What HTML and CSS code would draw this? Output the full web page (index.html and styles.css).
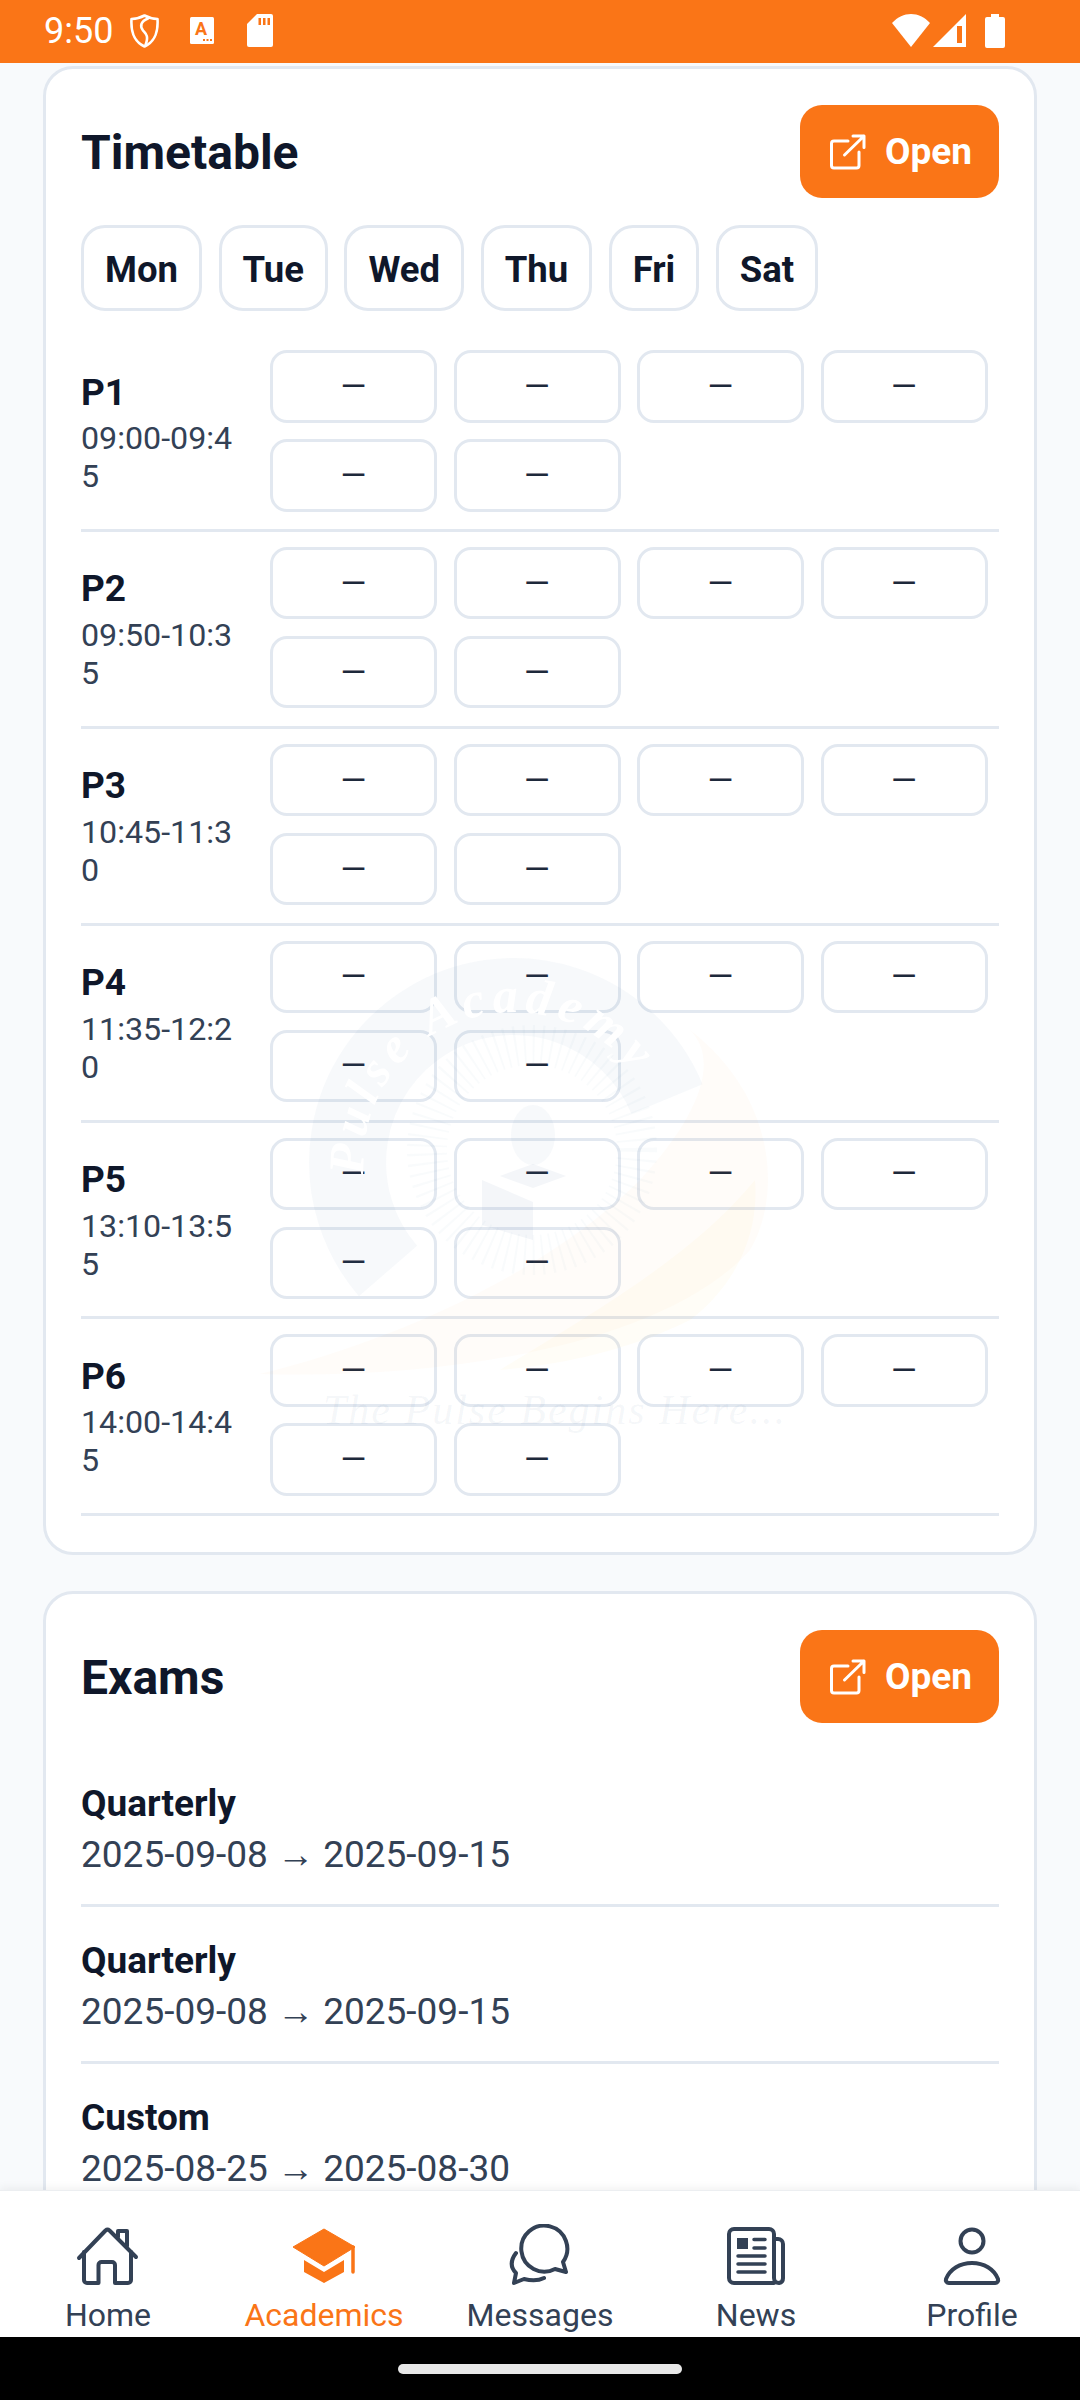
FILE: index.html
```html
<!DOCTYPE html>
<html lang="en">
<head>
    <meta charset="UTF-8">
    <meta name="viewport" content="width=device-width, initial-scale=1.0">
    <title>Academics</title>
    <link rel="stylesheet" href="styles.css">
</head>
<body>
<div class="screen">
    <div class="status-bar">
        <div class="status-left">
            <span class="clock">9:50</span>
            <svg class="ic-shield" viewBox="0 0 29 34" fill="none" stroke="#fff" stroke-width="2.6" stroke-linejoin="round"><path d="M14.5 1.5C19 4 23 4.8 27.5 5C28.2 17 26 27 14.5 32.5C3 27 .8 17 1.5 5C6 4.8 10 4 14.5 1.5Z"/><path d="M18 4.5C11 7 9.5 12 13 16.5C16 20 19 22 15.5 31" stroke-linecap="round"/></svg>
            <svg class="ic-sim" viewBox="0 0 24 27"><rect width="24" height="27" rx="1.5" fill="#fff"/><text x="11" y="18" text-anchor="middle" class="sim-letter">A</text><rect x="13" y="22" width="2" height="2" fill="#fa7517"/><rect x="16.5" y="22" width="2" height="2" fill="#fa7517"/><rect x="20" y="22" width="2" height="2" fill="#fa7517"/></svg>
            <svg class="ic-sd" viewBox="0 0 26 33"><path d="M10 0H24a2 2 0 0 1 2 2V31a2 2 0 0 1-2 2H2a2 2 0 0 1-2-2V10Z" fill="#fff"/><rect x="11.500" y="4" width="2.500" height="7" fill="#fa7517"/><rect x="16" y="4" width="2.500" height="7" fill="#fa7517"/><rect x="20.500" y="4" width="2.500" height="7" fill="#fa7517"/></svg>
        </div>
        <div class="status-right">
            <svg class="ic-wifi" viewBox="0 0 38 33"><path d="M19 33L0 9C11-3 27-3 38 9Z" fill="#fff"/></svg>
            <svg class="ic-signal" viewBox="0 0 33 33"><path d="M33 0V33H0Z" fill="#fff"/><rect x="24" y="12" width="5" height="17" fill="#fa7517"/></svg>
            <svg class="ic-battery" viewBox="0 0 20 34"><path d="M6 0H14V3H18a2 2 0 0 1 2 2V32a2 2 0 0 1-2 2H2a2 2 0 0 1-2-2V5a2 2 0 0 1 2-2H6Z" fill="#fff"/></svg>
        </div>
    </div>

    <div class="content">
        <section class="card">
            <div class="card-head">
                <h2>Timetable</h2>
                <button class="open-btn">
                    <svg viewBox="0 0 38 38" fill="none" stroke="#fff" stroke-width="3" stroke-linecap="round" stroke-linejoin="round"><path d="M19 8H5a2.500 2.500 0 0 0-2.500 2.500V32.500A2.500 2.500 0 0 0 5 35H27.500a2.500 2.500 0 0 0 2.500-2.500V19"/><path d="M15.500 22L35 3M24 3H35V14.500"/></svg>
                    Open
                </button>
            </div>
            <div class="days">
                <span class="day">Mon</span>
                <span class="day">Tue</span>
                <span class="day">Wed</span>
                <span class="day">Thu</span>
                <span class="day">Fri</span>
                <span class="day">Sat</span>
            </div>
            <div class="period">
                <div class="period-label"><b>P1</b><span>09:00-09:45</span></div>
                <div class="slots"><div class="slot">—</div><div class="slot">—</div><div class="slot">—</div><div class="slot">—</div><div class="slot">—</div><div class="slot">—</div></div>
            </div>
            <div class="period">
                <div class="period-label"><b>P2</b><span>09:50-10:35</span></div>
                <div class="slots"><div class="slot">—</div><div class="slot">—</div><div class="slot">—</div><div class="slot">—</div><div class="slot">—</div><div class="slot">—</div></div>
            </div>
            <div class="period">
                <div class="period-label"><b>P3</b><span>10:45-11:30</span></div>
                <div class="slots"><div class="slot">—</div><div class="slot">—</div><div class="slot">—</div><div class="slot">—</div><div class="slot">—</div><div class="slot">—</div></div>
            </div>
            <div class="period">
                <div class="period-label"><b>P4</b><span>11:35-12:20</span></div>
                <div class="slots"><div class="slot">—</div><div class="slot">—</div><div class="slot">—</div><div class="slot">—</div><div class="slot">—</div><div class="slot">—</div></div>
            </div>
            <div class="period">
                <div class="period-label"><b>P5</b><span>13:10-13:55</span></div>
                <div class="slots"><div class="slot">—</div><div class="slot">—</div><div class="slot">—</div><div class="slot">—</div><div class="slot">—</div><div class="slot">—</div></div>
            </div>
            <div class="period">
                <div class="period-label"><b>P6</b><span>14:00-14:45</span></div>
                <div class="slots"><div class="slot">—</div><div class="slot">—</div><div class="slot">—</div><div class="slot">—</div><div class="slot">—</div><div class="slot">—</div></div>
            </div>
        </section>

        <section class="card">
            <div class="card-head exams-head">
                <h2>Exams</h2>
                <button class="open-btn">
                    <svg viewBox="0 0 38 38" fill="none" stroke="#fff" stroke-width="3" stroke-linecap="round" stroke-linejoin="round"><path d="M19 8H5a2.500 2.500 0 0 0-2.500 2.500V32.500A2.500 2.500 0 0 0 5 35H27.500a2.500 2.500 0 0 0 2.500-2.500V19"/><path d="M15.500 22L35 3M24 3H35V14.500"/></svg>
                    Open
                </button>
            </div>
            <div class="exam"><b>Quarterly</b><span>2025-09-08 → 2025-09-15</span></div>
            <div class="exam"><b>Quarterly</b><span>2025-09-08 → 2025-09-15</span></div>
            <div class="exam"><b>Custom</b><span>2025-08-25 → 2025-08-30</span></div>
        </section>

        <!-- faint school logo that sits over the scroll area -->
        <svg class="watermark" viewBox="0 0 560 520" fill="none">
            <defs><path id="ring-text" d="M114 235A150 150 0 0 1 389 140"/></defs>
            <path d="M138 331A166 166 0 1 1 417 159" stroke="#5f85ad" stroke-opacity=".05" stroke-width="77"/>
            <text class="wm-ring"><textPath href="#ring-text">Pulse Academy</textPath></text>
            <circle cx="282" cy="210" r="105" stroke="#5f85ad" stroke-opacity=".035" stroke-width="40" stroke-dasharray="2 7"/>
            <path d="M10 434C150 400 300 330 390 240C450 175 470 120 440 90C530 160 530 260 500 310C420 400 210 440 10 434Z" fill="#fb923c" fill-opacity=".03"/>
            <path d="M250 430C330 380 440 320 505 240C510 300 480 350 440 380C380 410 310 425 250 430Z" fill="#facc15" fill-opacity=".035"/>
            <ellipse cx="283" cy="195" rx="22" ry="30" fill="#5f85ad" fill-opacity=".05"/>
            <path d="M283 224L250 236L283 248L316 236Z" fill="#5f85ad" fill-opacity=".07"/>
            <path d="M232 240L283 262V300L232 285Z" fill="#5f85ad" fill-opacity=".07"/>
            <text x="305" y="484" text-anchor="middle" class="wm-motto">The Pulse Begins Here...</text>
        </svg>
    </div>

    <nav class="bottom-nav">
        <div class="nav-item">
            <svg viewBox="0 0 64 64" fill="none" stroke="#334155" stroke-width="4" stroke-linecap="round" stroke-linejoin="round"><path d="M3 34L29.500 6.500a3 3 0 0 1 4 0L60 33"/><path d="M42 13V7H51V22"/><path d="M8 28V56a3 3 0 0 0 3 3H22.500V41a3 3 0 0 1 3-3H36a3 3 0 0 1 3 3V59H52a3 3 0 0 0 3-3V28"/></svg>
            <span>Home</span>
        </div>
        <div class="nav-item active">
            <svg viewBox="0 0 64 64" fill="#fa7517"><path d="M1 23L32 5L63 23L32 42Z" stroke="#fa7517" stroke-width="1" stroke-linejoin="round"/><path d="M12 36L32 48L52 36V48L32 59L12 48Z"/><path d="M61 23V48" stroke="#fa7517" stroke-width="3.500" stroke-linecap="round"/></svg>
            <span>Academics</span>
        </div>
        <div class="nav-item">
            <svg viewBox="0 0 64 64" fill="none" stroke="#334155" stroke-width="4" stroke-linecap="round" stroke-linejoin="round"><path d="M55 38L58 48L47 45A23 23 0 1 1 55 38Z"/><path d="M8 29C2 37 3 44 8 49L6 59L16 55C24 57 30 57 36 54"/></svg>
            <span>Messages</span>
        </div>
        <div class="nav-item">
            <svg viewBox="0 0 64 64" fill="none" stroke="#334155" stroke-width="4" stroke-linecap="round" stroke-linejoin="round"><path d="M50 59H10a5 5 0 0 1-5-5V10a5 5 0 0 1 5-5H45a5 5 0 0 1 5 5V54a5 5 0 0 0 5 5a5 5 0 0 0 4-5V20a5 5 0 0 0-5-5H50"/><rect x="13" y="14" width="11" height="11" fill="#334155" stroke="none"/><path d="M30 15.500H41M30 24H41M14 32H41M14 40H41M14 48H41" stroke-width="3.500"/></svg>
            <span>News</span>
        </div>
        <div class="nav-item">
            <svg viewBox="0 0 64 64" fill="none" stroke="#334155" stroke-width="4" stroke-linejoin="round"><circle cx="32" cy="17" r="11.500"/><path d="M9 59a3 3 0 0 1-3-4C10 45 20 39 32 39C44 39 54 45 58 55a3 3 0 0 1-3 4Z"/></svg>
            <span>Profile</span>
        </div>
    </nav>

    <div class="gesture-bar"><div class="gesture-pill"></div></div>
</div>
</body>
</html>
```

FILE: styles.css
```css
* {
    box-sizing: border-box;
}
body {
    margin: 0;
    font-family: 'Roboto', 'Liberation Sans', sans-serif;
    background-color: #f8fafc;
}
b {
    font-weight: 700;
}
.screen {
    width: 1080px;
    height: 2400px;
    display: flex;
    flex-direction: column;
    overflow: hidden;
}

/* status bar */
.status-bar {
    height: 63px;
    flex-shrink: 0;
    background-color: #fa7517;
    display: flex;
    justify-content: space-between;
    align-items: center;
    padding: 0 75px 2px 44px;
}
.status-left, .status-right {
    display: flex;
    align-items: center;
}
.clock {
    color: white;
    font-size: 36px;
    width: 69px;
}
.ic-shield {
    width: 29px;
    height: 34px;
    margin-left: 17px;
}
.ic-sim {
    width: 24px;
    height: 27px;
    margin-left: 31px;
}
.sim-letter {
    font-size: 18px;
    font-weight: 700;
    fill: #fa7517;
}
.ic-sd {
    width: 26px;
    height: 33px;
    margin-left: 33px;
}
.ic-wifi {
    width: 38px;
    height: 33px;
}
.ic-signal {
    width: 33px;
    height: 33px;
    margin-left: 3px;
}
.ic-battery {
    width: 20px;
    height: 34px;
    margin-left: 19px;
}

/* scroll area */
.content {
    flex: 1;
    min-height: 0;
    position: relative;
    overflow: hidden;
    padding: 3px 43px 0;
}
.card {
    background: white;
    border: 3px solid #e2e8f0;
    border-radius: 30px;
    padding: 36px 35px;
    margin-bottom: 36px;
}
.card-head {
    display: flex;
    justify-content: space-between;
    align-items: center;
    margin-bottom: 27px;
}
h2 {
    margin: 0;
    padding-top: 2px;
    font-size: 48px;
    font-weight: 700;
    color: #0f172a;
}
.open-btn {
    width: 199px;
    height: 93px;
    display: flex;
    justify-content: center;
    align-items: center;
    gap: 18px;
    padding: 0 0 0 2px;
    background-color: #fa7517;
    color: white;
    border: none;
    border-radius: 22px;
    font-family: inherit;
    font-size: 37px;
    font-weight: 700;
}
.open-btn svg {
    width: 38px;
    height: 38px;
}

.days {
    display: flex;
    gap: 16.5px;
    margin-bottom: 24px;
}
.day {
    height: 86px;
    display: flex;
    align-items: center;
    padding: 2px 21px 0;
    border: 3px solid #e2e8f0;
    border-radius: 24px;
    font-size: 36.5px;
    font-weight: 700;
    color: #0f172a;
}

.period {
    display: flex;
    align-items: center;
    gap: 29px;
    padding: 15px 0 17.4px;
    border-bottom: 3px solid #e2e8f0;
}
.period-label {
    width: 160px;
    flex-shrink: 0;
    padding-top: 3px;
}
.period-label b {
    display: block;
    font-size: 37px;
    line-height: 46px;
    color: #0f172a;
}
.period-label span {
    display: block;
    margin-top: 3.5px;
    font-size: 32.2px;
    line-height: 38px;
    color: #334155;
    word-break: break-all;
}
.slots {
    display: flex;
    flex-wrap: wrap;
    gap: 16.5px;
}
.slot {
    width: 167px;
    height: 72.5px;
    display: flex;
    justify-content: center;
    align-items: center;
    border: 3px solid #e2e8f0;
    border-radius: 17px;
    font-size: 33px;
    color: #1e293b;
}

.exam {
    padding: 29px 0 23px;
    border-bottom: 3px solid #e2e8f0;
}
.exam b {
    display: block;
    font-size: 37px;
    line-height: 50px;
    color: #0f172a;
}
.exam span {
    display: block;
    font-size: 37px;
    line-height: 52px;
    color: #334155;
}

.watermark {
    position: absolute;
    left: 250px;
    top: 877px;
    width: 560px;
    height: 520px;
    pointer-events: none;
}
.wm-ring {
    font-family: 'Liberation Serif', serif;
    font-style: italic;
    font-weight: 700;
    font-size: 50px;
    letter-spacing: 6px;
    fill: #fff;
}
.wm-motto {
    font-family: 'Liberation Serif', serif;
    font-style: italic;
    font-size: 42px;
    letter-spacing: 2px;
    fill: #5f85ad;
    fill-opacity: .07;
}

/* bottom navigation */
.bottom-nav {
    height: 147px;
    flex-shrink: 0;
    position: relative;
    display: flex;
    background: white;
    border-top: 1px solid #eceef1;
    box-shadow: 0 -3px 8px rgba(0, 0, 0, 0.05);
}
.nav-item {
    flex: 1;
    display: flex;
    flex-direction: column;
    align-items: center;
    padding-top: 33px;
    font-size: 32px;
    color: #334155;
}
.nav-item svg {
    width: 64px;
    height: 64px;
    flex-shrink: 0;
}
.nav-item span {
    line-height: 38px;
    margin-top: 8px;
}
.nav-item.active {
    color: #fa7517;
}

.gesture-bar {
    height: 63px;
    flex-shrink: 0;
    position: relative;
    background: black;
    display: flex;
    justify-content: center;
    padding-top: 27px;
}
.gesture-pill {
    width: 284px;
    height: 10px;
    border-radius: 5px;
    background-color: #e8e8e8;
}
```
